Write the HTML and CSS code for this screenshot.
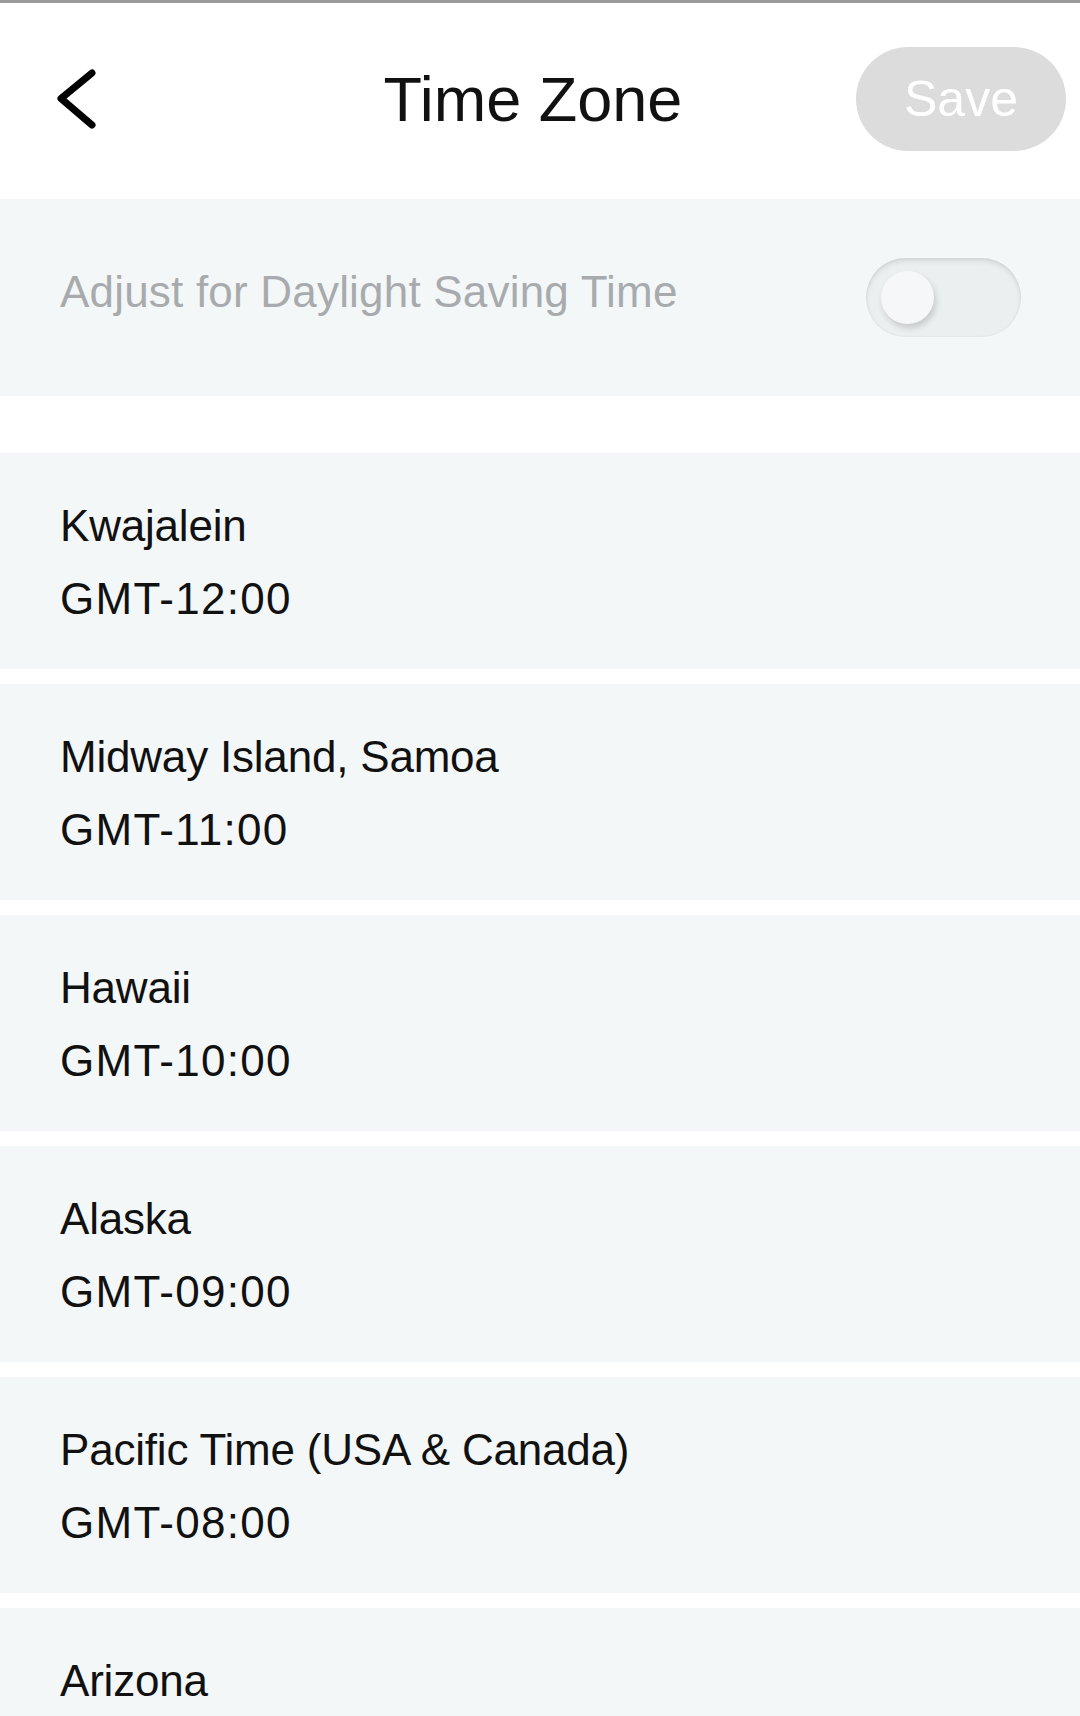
FILE: index.html
```html
<!DOCTYPE html>
<html lang="en">
<head>
<meta charset="utf-8">
<meta name="viewport" content="width=device-width,initial-scale=1">
<title>Time Zone</title>
<link rel="stylesheet" href="styles.css">
</head>
<body>

<div class="topline"></div>

<!-- ======= HEADER ======= -->
<header class="nav">
  <button class="nav-back" aria-label="Back">
    <svg width="40" height="62" viewBox="0 0 40 62"><path d="M36 5 L5 30.5 L36 57" fill="none" stroke="#000" stroke-width="7" stroke-linecap="round" stroke-linejoin="round"/></svg>
  </button>
  <h1 class="nav-title">Time Zone</h1>
  <div class="nav-right"><button class="btn-save" disabled>Save</button></div>
</header>

<!-- ======= DST ======= -->
<section class="dst-row">
  <span class="dst-label">Adjust for Daylight Saving Time</span>
  <div class="toggle"><div class="toggle-knob"></div></div>
</section>

<!-- ======= ZONES ======= -->
<ul class="zone-list">
  <li class="zone"><div class="zone-name">Kwajalein</div><div class="zone-gmt">GMT-12:00</div></li>
  <li class="zone"><div class="zone-name">Midway Island, Samoa</div><div class="zone-gmt">GMT-11:00</div></li>
  <li class="zone"><div class="zone-name">Hawaii</div><div class="zone-gmt">GMT-10:00</div></li>
  <li class="zone"><div class="zone-name">Alaska</div><div class="zone-gmt">GMT-09:00</div></li>
  <li class="zone"><div class="zone-name">Pacific Time (USA &amp; Canada)</div><div class="zone-gmt">GMT-08:00</div></li>
  <li class="zone"><div class="zone-name">Arizona</div><div class="zone-gmt">GMT-07:00</div></li>
</ul>

</body>
</html>
```

FILE: styles.css
```css
/* ---------- PALETTE ---------- */
:root{
  --bg:#ffffff;
  --row:#f4f7f8;
  --text:#111;
  --muted:#a8abad;
  --btn-off:#dcdcdc;
}

/* ---------- RESET ---------- */
*{margin:0;padding:0;box-sizing:border-box;font-family:"Liberation Sans",Arial,sans-serif;}
html,body{overflow:hidden;}
body{background:var(--bg);color:var(--text);width:1080px;}
button{border:none;background:none;font:inherit;cursor:pointer;}

.topline{height:3px;background:#9b9b9b;}

/* ---------- HEADER ---------- */
.nav{height:196px;padding-bottom:4px;display:grid;grid-template-columns:1fr auto 1fr;align-items:center;}
.nav-back{justify-self:start;margin-left:56px;display:flex;}
.nav-title{font-size:63px;font-weight:400;padding-right:14px;}
.nav-right{justify-self:end;}
.btn-save{width:210px;height:104px;border-radius:52px;margin-right:14px;background:var(--btn-off);color:#fff;font-size:50px;cursor:default;}

/* ---------- DST ROW ---------- */
.dst-row{height:197px;background:var(--row);display:flex;align-items:center;justify-content:space-between;padding:0 59px 0 60px;}
.dst-label{font-size:44px;color:var(--muted);margin-bottom:12px;letter-spacing:.2px;}
.toggle{width:155px;height:79px;border-radius:40px;background:#eceff0;display:flex;align-items:center;
  box-shadow:inset 0 3px 5px rgba(0,0,0,.10),inset 0 0 2px rgba(0,0,0,.08);}
.toggle-knob{width:53px;height:53px;border-radius:50%;margin-left:15px;background:#f6f7f9;
  box-shadow:2px 4px 6px rgba(0,0,0,.16);}

/* ---------- ZONE LIST ---------- */
.zone-list{list-style:none;margin-top:57px;display:flex;flex-direction:column;gap:15px;}
.zone{background:var(--row);padding:36px 60px 34px;font-size:44px;line-height:73px;}
.zone-name{letter-spacing:-.2px;}
.zone-gmt{letter-spacing:1.3px;}
```
